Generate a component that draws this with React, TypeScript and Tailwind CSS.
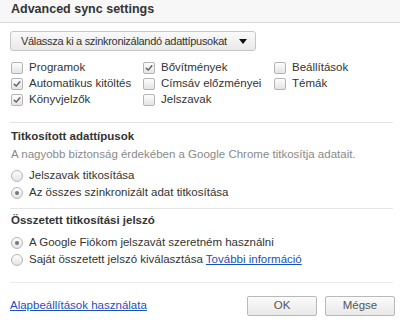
import React from 'react';

const Check = ({ checked }: { checked?: boolean }) => (
  <span className="w-[12px] h-[12px] shrink-0 rounded-[2px] border border-[#b5b5b5] bg-gradient-to-b from-[#fdfdfd] to-[#e4e4e4] flex items-center justify-center">
    {checked && (
      <svg viewBox="0 0 10 10" className="w-[8px] h-[8px]">
        <path d="M1.5 5.2 L4 7.6 L8.6 2.2" fill="none" stroke="#5a5a5a" strokeWidth="1.7" strokeLinecap="round" strokeLinejoin="round" />
      </svg>
    )}
  </span>
);

const Radio = ({ checked }: { checked?: boolean }) => (
  <span className="w-[12px] h-[12px] shrink-0 rounded-full border border-[#b5b5b5] bg-gradient-to-b from-[#fdfdfd] to-[#e4e4e4] flex items-center justify-center">
    {checked && <span className="w-[4px] h-[4px] rounded-full bg-[#777]" />}
  </span>
);

const CheckItem = ({ label, checked }: { label: string; checked?: boolean }) => (
  <div className="flex items-center gap-[6px] h-[16px] whitespace-nowrap">
    <Check checked={checked} />
    <span>{label}</span>
  </div>
);

const RadioItem = ({ children, checked }: { children: React.ReactNode; checked?: boolean }) => (
  <div className="flex items-center gap-[6px] h-[17px] whitespace-nowrap">
    <Radio checked={checked} />
    <span>{children}</span>
  </div>
);

export default function App() {
  const items: [string, boolean][] = [
    ['Programok', false],
    ['Bővítmények', true],
    ['Beállítások', false],
    ['Automatikus kitöltés', true],
    ['Címsáv előzményei', false],
    ['Témák', false],
    ['Könyvjelzők', true],
    ['Jelszavak', false],
  ];

  return (
    <div className="w-[400px] h-[322px] bg-white text-[11.5px] text-[#333] overflow-hidden" style={{ fontFamily: '"Liberation Sans", Arial, sans-serif' }}>
      {/* Header */}
      <div className="h-[23px] bg-[#f7f7f7] border-b border-[#dcdcdc] px-[11px] pt-[1px]">
        <h1 className="text-[12.5px] font-bold leading-[17px] text-[#333]">Advanced sync settings</h1>
      </div>

      <div className="px-[10px]">
        {/* Dropdown */}
        <button className="mt-[8px] w-[246px] h-[20px] rounded-[3px] border border-[#c6c6c6] bg-gradient-to-b from-[#fafafa] to-[#e9e9e9] flex items-center justify-between pl-[10px] pr-[8px] text-[#333] whitespace-nowrap">
          <span className="text-[11px] tracking-[-0.3px]">Válassza ki a szinkronizálandó adattípusokat</span>
          <svg viewBox="0 0 8 5" className="w-[8px] h-[5px] shrink-0">
            <path d="M0 0 H8 L4 5 Z" fill="#111" />
          </svg>
        </button>

        {/* Checkboxes */}
        <div className="mt-[9px] grid grid-cols-[132px_131px_1fr] pl-[1px]">
          {items.map(([label, checked]) => (
            <CheckItem key={label} label={label} checked={checked} />
          ))}
        </div>

        <div className="mt-[14px] border-t border-[#e3e3e3] mr-[-3px]" />

        {/* Encrypted data types */}
        <div className="pl-[1px]">
          <h2 className="mt-[5px] font-bold leading-[16px]">Titkosított adattípusok</h2>
          <p className="mt-[2px] leading-[16px] text-[#8a8a8a]">A nagyobb biztonság érdekében a Google Chrome titkosítja adatait.</p>
          <div className="mt-[5px]">
            <RadioItem>Jelszavak titkosítása</RadioItem>
            <RadioItem checked>Az összes szinkronizált adat titkosítása</RadioItem>
          </div>
        </div>

        <div className="mt-[7px] border-t border-[#e3e3e3] mr-[-3px]" />

        {/* Passphrase */}
        <div className="pl-[1px]">
          <h2 className="mt-[3px] font-bold leading-[16px]">Összetett titkosítási jelszó</h2>
          <div className="mt-[6px]">
            <RadioItem checked>A Google Fiókom jelszavát szeretném használni</RadioItem>
            <RadioItem>
              Saját összetett jelszó kiválasztása{' '}
              <a href="#" className="text-[#1a4fbf] underline">További információ</a>
            </RadioItem>
          </div>
        </div>

        <div className="mt-[14px] border-t border-[#ececec] mr-[-3px]" />

        {/* Footer */}
        <div className="mt-[13px] flex items-center justify-between">
          <a href="#" className="text-[#1a4fbf] underline">Alapbeállítások használata</a>
          <div className="flex gap-[8px] mr-[-5px]">
            <button className="w-[70px] h-[20px] rounded-[2px] border border-[#b9b9b9] bg-gradient-to-b from-[#fbfbfb] to-[#e8e8e8] text-[#555]">OK</button>
            <button className="w-[70px] h-[20px] rounded-[2px] border border-[#b9b9b9] bg-gradient-to-b from-[#fbfbfb] to-[#e8e8e8] text-[#555]">Mégse</button>
          </div>
        </div>
      </div>
    </div>
  );
}
